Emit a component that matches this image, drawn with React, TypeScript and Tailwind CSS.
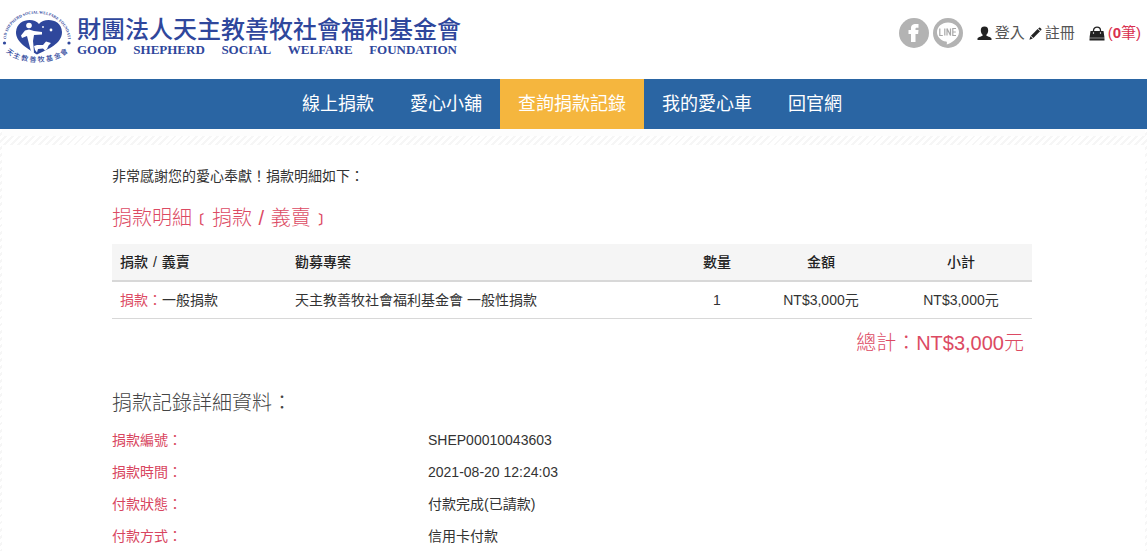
import React from 'react';

type NavItem = {
  label: string;
  active?: boolean;
};

type DonationItem = {
  type: string;
  name: string;
  project: string;
  quantity: number;
  price: string;
  subtotal: string;
};

const navItems: NavItem[] = [
  { label: '線上捐款' },
  { label: '愛心小舖' },
  { label: '查詢捐款記錄', active: true },
  { label: '我的愛心車' },
  { label: '回官網' },
];

const donationItems: DonationItem[] = [
  {
    type: '捐款',
    name: '一般捐款',
    project: '天主教善牧社會福利基金會 一般性捐款',
    quantity: 1,
    price: 'NT$3,000元',
    subtotal: 'NT$3,000元',
  },
];

const details = [
  { label: '捐款編號：', value: 'SHEP00010043603' },
  { label: '捐款時間：', value: '2021-08-20 12:24:03' },
  { label: '付款狀態：', value: '付款完成(已請款)' },
  { label: '付款方式：', value: '信用卡付款' },
];

const LogoMark = () => (
  <svg width="74" height="56" viewBox="0 0 74 56" className="shrink-0 overflow-visible" aria-hidden="true">
    <defs>
      <path id="arc-top" d="M6 32 A31 26.500 0 0 1 68 32" />
      <path id="arc-bottom" d="M3 37 A34 17 0 0 0 71 37" />
    </defs>
    <path
      d="M39 16 C34 9.500 17 10.500 16 24 C15.500 34 28 41 37 46.500 C48 41 62 36 62 24 C61.500 10.500 44 9.500 39 16 Z"
      fill="#2f479c"
    />
    {/* 牧人 */}
    <circle cx="29" cy="17.500" r="2.800" fill="#fff" />
    <path d="M21 27.500 L25 22.500 L29 21.500 L34 23 L42 24 V26.500 L34 27 L33 33 L33.500 38 L34 45 L31 43.500 L29 36 L27 28 L22 30 Z" fill="#fff" />
    {/* 羊 */}
    <path d="M34 38 L37 37 H43 L46 33.500 L51 35 L48.500 37.500 L47 41 L45 42.500 L43 40.500 L38 41 L37 44.500 L35 42 Z" fill="#fff" />
    <circle cx="43" cy="19" r="0.900" fill="#fff" />
    <circle cx="51" cy="22" r="1.400" fill="#fff" />
    <circle cx="4.500" cy="35" r="1.600" fill="#2f479c" />
    <circle cx="69" cy="35" r="1.600" fill="#2f479c" />
    <text fill="#2f479c" className="font-['Liberation_Serif',serif] text-[4px] font-bold">
      <textPath href="#arc-top" startOffset="50%" textAnchor="middle">
        GOOD SHEPHERD SOCIAL WELFARE FOUNDATION
      </textPath>
    </text>
    <text fill="#2f479c" className="font-['Noto_Sans_CJK_TC',sans-serif] text-[7px] font-medium">
      <textPath href="#arc-bottom" startOffset="50%" textAnchor="middle">
        天 主 教 善 牧 基 金 會
      </textPath>
    </text>
  </svg>
);

const FacebookIcon = () => (
  <svg width="30" height="30" viewBox="0 0 30 30" aria-hidden="true">
    <circle cx="15" cy="15" r="15" fill="#b3b3b3" />
    <path
      d="M12 24 V16 H9.500 V12 H12 V10.200 C12 7 14 6 16.800 6 H19.500 V9.800 H17.700 C16.700 9.800 16.500 10.200 16.500 11 V12 H19.500 L19.100 16 H16.500 V24 Z"
      fill="#fff"
    />
  </svg>
);

const LineIcon = () => (
  <svg width="30" height="30" viewBox="0 0 30 30" aria-hidden="true">
    <circle cx="15" cy="15" r="15" fill="#b3b3b3" />
    <path
      d="M15 4.500 C8.800 4.500 4 8.800 4 14.200 C4 19 8 22.600 13 23.600 C14.200 23.900 14 24.600 13.700 26.600 C17 25.500 26 20.500 26 14.200 C26 8.800 21.200 4.500 15 4.500 Z"
      fill="#fff"
    />
    <path
      d="M6.800 10.500 V17.500 H9.800 M11.800 10.500 V17.500 M14 17.500 V10.500 L17.500 17.500 V10.500 M23 10.500 H19.800 V17.500 H23 M19.800 14 H22.800"
      fill="none"
      stroke="#a8a8a8"
      strokeWidth="1.200"
    />
  </svg>
);

const UserIcon = () => (
  <svg width="15" height="15" viewBox="0 0 15 15" fill="#222" aria-hidden="true">
    <path d="M7.500 0.500 C4.800 0.500 3.800 2.200 3.800 4.400 C3.800 6.200 4.600 7.800 5.600 8.700 V9.700 C3.600 10.600 0.500 11.300 0.500 12.800 V14 H14.500 V12.800 C14.500 11.300 11.400 10.600 9.400 9.700 V8.700 C10.400 7.800 11.200 6.200 11.200 4.400 C11.200 2.200 10.200 0.500 7.500 0.500 Z" />
  </svg>
);

const PencilIcon = () => (
  <svg width="13" height="13" viewBox="0 0 14 14" fill="#222" aria-hidden="true">
    <path d="M9.900 1.600 L10.900 0.700 Q11.500 0.300 12 0.800 L13.200 2 Q13.700 2.500 13.300 3.100 L12.400 4.100 Z" />
    <path d="M9.300 2.100 L11.900 4.700 L4.700 11.900 L2.100 9.300 Z" />
    <path d="M1.600 9.900 L4.100 12.400 L0.400 13.600 Z" />
  </svg>
);

const BagIcon = () => (
  <svg width="16" height="15" viewBox="0 0 16 15" aria-hidden="true">
    <path d="M4.500 7 V4.500 C4.500 0 11.500 0 11.500 4.500 V7" fill="none" stroke="#222" strokeWidth="1.300" />
    <path d="M1.500 5 H14.500 L15.500 11.700 H0.500 Z M0.500 12.300 H15.500 V14.500 H0.500 Z" fill="#222" />
    <circle cx="4.500" cy="7" r="0.700" fill="#fff" />
    <circle cx="11.500" cy="7" r="0.700" fill="#fff" />
  </svg>
);

const Header = () => (
  <header className="flex h-[79px] items-start justify-between pr-[6px]">
    <a href="#" className="flex items-start gap-[3px] pt-2 text-[#2f479c]">
      <LogoMark />
      <div className="pt-2">
        <div className="font-['Noto_Sans_CJK_TC',sans-serif] text-[24px] leading-6 font-medium whitespace-nowrap">
          財團法人天主教善牧社會福利基金會
        </div>
        <div className="flex justify-between pt-[2px] pr-1 font-['Liberation_Serif',serif] text-[13px] leading-4 font-bold">
          <span>GOOD</span>
          <span>SHEPHERD</span>
          <span>SOCIAL</span>
          <span>WELFARE</span>
          <span>FOUNDATION</span>
        </div>
      </div>
    </a>

    <div className="flex items-center pt-[18px] text-[15px] leading-5 text-[#555]">
      <a href="#" aria-label="Facebook" className="mr-1">
        <FacebookIcon />
      </a>
      <a href="#" aria-label="LINE" className="mr-[14px]">
        <LineIcon />
      </a>
      <a href="#" className="mr-1 flex items-center gap-[3px]">
        <UserIcon />
        登入
      </a>
      <a href="#" className="mr-[14px] flex items-center gap-[3px]">
        <PencilIcon />
        註冊
      </a>
      <a href="#" className="flex items-center gap-[3px] text-[#d9304f]">
        <BagIcon />
        <span>
          (<b>0</b>筆)
        </span>
      </a>
    </div>
  </header>
);

const Nav = () => (
  <nav className="flex justify-center bg-[#2a65a3] pr-[3px]">
    {navItems.map(item => (
      <a
        key={item.label}
        href="#"
        className={`px-[18px] text-[18px] leading-[50px] font-normal text-white ${item.active ? 'bg-[#f5b63e]' : ''}`}
      >
        {item.label}
      </a>
    ))}
  </nav>
);

const DonationTable = () => (
  <table className="w-full table-fixed border-collapse text-center">
    <colgroup>
      <col className="w-[175px]" />
      <col className="w-[395px]" />
      <col className="w-[70px]" />
      <col className="w-[138px]" />
      <col className="w-[142px]" />
    </colgroup>
    <thead>
      <tr className="border-b-2 border-[#d8d8d8] bg-[#f5f5f5] text-[#222]">
        <th className="p-2 text-left font-medium">
          捐款<span className="mx-px"> / </span>義賣
        </th>
        <th className="p-2 text-left font-medium">勸募專案</th>
        <th className="p-2 font-medium">數量</th>
        <th className="p-2 font-medium">金額</th>
        <th className="p-2 font-medium">小計</th>
      </tr>
    </thead>
    <tbody>
      {donationItems.map(item => (
        <tr key={item.name} className="border-b border-[#d8d8d8]">
          <td className="p-2 text-left">
            <span className="text-[#dc4a63]">{item.type}：</span>
            {item.name}
          </td>
          <td className="p-2 text-left">{item.project}</td>
          <td className="p-2">{item.quantity}</td>
          <td className="p-2">{item.price}</td>
          <td className="p-2">{item.subtotal}</td>
        </tr>
      ))}
    </tbody>
  </table>
);

export default function App() {
  return (
    <div className="flex min-h-screen flex-col bg-white font-['Liberation_Sans','Noto_Sans_CJK_TC',sans-serif] text-[14px] leading-5 text-[#333]">
      <Header />
      <Nav />
      <div className="flex flex-1 flex-col bg-[repeating-linear-gradient(135deg,#ffffff_0px,#ffffff_3px,#f6f6f6_3px,#f6f6f6_5px)] px-[2px]">
        <div className="h-[7px] bg-[#fdfdfd]" />
        <main className="mt-[9px] flex-1 bg-white pr-[3px]">
          <div className="mx-auto max-w-[920px] pt-[21px]">
            <p>非常感謝您的愛心奉獻！捐款明細如下：</p>
            <h2 className="mt-5 mb-[14px] text-[20px] leading-6 font-light text-[#dc4a63]">
              捐款明細<span className="font-medium">﹝</span>捐款<span className="mx-px"> / </span>義賣
              <span className="font-medium">﹞</span>
            </h2>
            <DonationTable />
            <p className="mt-3 pr-2 text-right text-[20px] leading-6 font-light text-[#dc4a63]">總計：NT$3,000元</p>
            <h3 className="mt-9 text-[20px] leading-6 font-light text-[#444]">捐款記錄詳細資料：</h3>
            <dl className="mt-[15px] grid grid-cols-[316px_1fr] gap-y-3">
              {details.map(item => (
                <React.Fragment key={item.label}>
                  <dt className="text-[#d84560]">{item.label}</dt>
                  <dd>{item.value}</dd>
                </React.Fragment>
              ))}
            </dl>
          </div>
        </main>
      </div>
    </div>
  );
}
